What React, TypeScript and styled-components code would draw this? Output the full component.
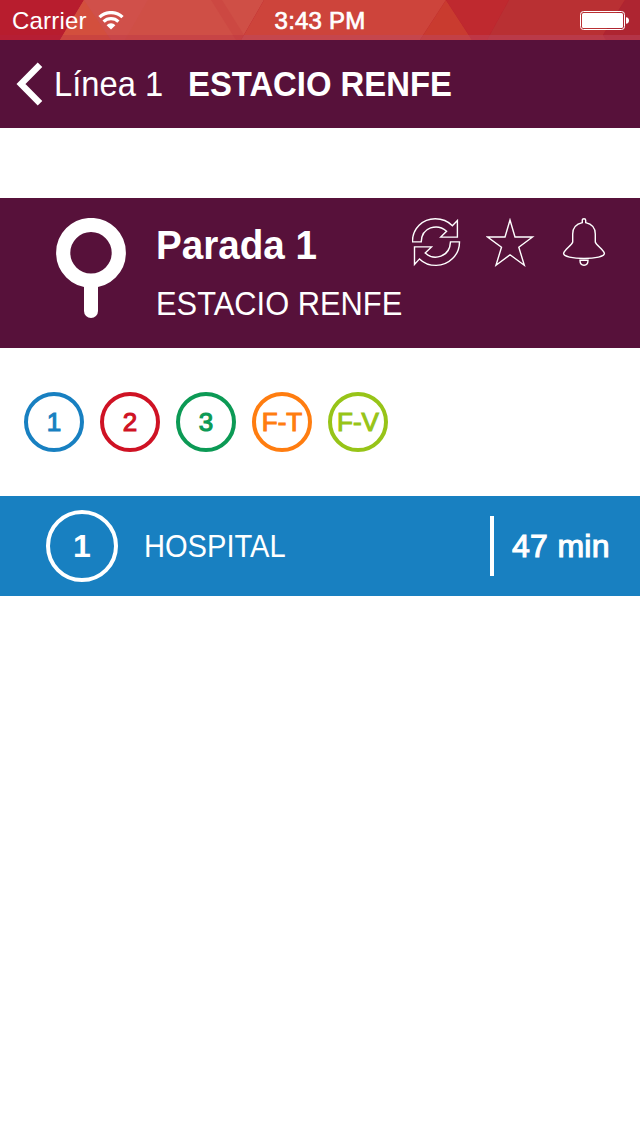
import React from "react";
import styled, { createGlobalStyle } from "styled-components";

const PLUM = "#57113a";
const BLUE = "#1880c1";

const GlobalStyle = createGlobalStyle`
  * { box-sizing: border-box; }
  body {
    margin: 0;
    background: #fff;
    font-family: "Liberation Sans", Arial, sans-serif;
  }
  svg { flex-shrink: 0; }
`;

const Screen = styled.main`
  width: 640px;
  height: 1136px;
  background: #fff;
  overflow: hidden;
`;

const StatusBar = styled.header`
  position: relative;
  display: grid;
  grid-template-columns: 1fr auto 1fr;
  align-items: center;
  height: 40px;
  padding: 1px 11px 0 12px;
  color: #fff;
  font-size: 24px;
`;

const Backdrop = styled.svg`
  position: absolute;
  inset: 0;
`;

const Carrier = styled.div`
  position: relative;
  display: flex;
  align-items: center;
  gap: 11px;
  letter-spacing: 0.2px;
`;

const Clock = styled.div`
  position: relative;
  padding-right: 1px;
  letter-spacing: 0.2px;
  -webkit-text-stroke: 0.7px #fff;
`;

const BatteryBox = styled.div`
  position: relative;
  display: flex;
  justify-content: flex-end;
`;

const NavBar = styled.nav`
  display: flex;
  align-items: center;
  height: 88px;
  padding-left: 16px;
  background: ${PLUM};
  color: #fff;
`;

/* Text narrowed horizontally from its left edge. */
const Condensed = styled.span<{ $scale: number }>`
  display: block;
  width: max-content;
  transform: scaleX(${(p) => p.$scale});
  transform-origin: left;
`;

const BackLabel = styled.span`
  margin-left: 10px;
  width: 134px;
  font-size: 35px;
  white-space: nowrap;
`;

const NavTitle = styled.h1`
  margin: 0;
  font-size: 35px;
  font-weight: 700;
`;

const StopPanel = styled.section`
  display: flex;
  height: 150px;
  margin-top: 70px;
  padding: 20px 30px 0 56px;
  background: ${PLUM};
  color: #fff;
`;

const StopText = styled.div`
  flex: 1;
  min-width: 0;
  margin-left: 30px;
  white-space: nowrap;
`;

const StopName = styled.h2`
  margin: 0;
  font-size: 40px;
  font-weight: 700;
  line-height: 55px;
`;

const StopPlace = styled.p`
  margin: 0;
  font-size: 33px;
  line-height: 62px;
`;

const Actions = styled.div`
  display: flex;
  gap: 24px;
  height: 50px;
`;

const LineList = styled.div`
  display: flex;
  gap: 16px;
  padding: 44px 24px;
`;

const LineBadge = styled.span<{ $color: string; $size: number; $font: number }>`
  display: flex;
  align-items: center;
  justify-content: center;
  width: ${(p) => p.$size}px;
  height: ${(p) => p.$size}px;
  border: 4px solid ${(p) => p.$color};
  border-radius: 50%;
  color: ${(p) => p.$color};
  font-size: ${(p) => p.$font}px;
  font-weight: ${(p) => (p.$size > 60 ? 700 : 400)};
  -webkit-text-stroke: ${(p) => (p.$size > 60 ? 0 : 1.1)}px ${(p) => p.$color};
  white-space: nowrap;
`;

const ArrivalRow = styled.div`
  display: flex;
  align-items: center;
  height: 100px;
  padding-left: 46px;
  background: ${BLUE};
  color: #fff;
`;

const Destination = styled.span`
  flex: 1;
  margin-left: 26px;
  padding-top: 1px;
  font-size: 31px;
`;

const Wait = styled.span`
  display: flex;
  align-items: center;
  width: 150px;
  height: 60px;
  padding-left: 18px;
  border-left: 4px solid #fff;
  font-size: 32px;
  letter-spacing: 0.3px;
  -webkit-text-stroke: 1.1px #fff;
`;

const lines = [
  { name: "1", color: BLUE },
  { name: "2", color: "#cf1224" },
  { name: "3", color: "#0c9a55" },
  { name: "F-T", color: "#ff7d10" },
  { name: "F-V", color: "#97c418" },
];

const StatusBackdrop = () => (
  <Backdrop width="640" height="40" viewBox="0 0 640 40">
    <rect width="640" height="40" fill="#b81d2e" />
    <path d="M84 0H264L241 40H60Z" fill="#cf4f46" />
    <path d="M84 0L111 40H60Z" fill="#d34f3d" />
    <path d="M84 0H148L125 40H111Z" fill="#d0504a" />
    <path d="M211 0H222L244 35L241 40H236Z" fill="#cc4842" />
    <path d="M264 0H446L420 40H241Z" fill="#cd443b" />
    <path d="M446 0L472 40H420Z" fill="#c93b2f" />
    <path d="M446 0H509L487 40H472Z" fill="#bf292f" />
    <path d="M509 0H625L603 35L606 40H487Z" fill="#b93033" />
    <path d="M625 0H640V40H606L603 35Z" fill="#ae2531" />
    <path d="M0 35H640V40H0Z" fill="#b02348" opacity="0.25" />
    <path d="M244 35H640V40H241Z" fill="#c8637a" opacity="0.25" />
  </Backdrop>
);

const WifiIcon = () => (
  <svg width="26" height="20" viewBox="0 0 26 20" fill="none" stroke="#fff" strokeWidth="3.2">
    <path d="M1.500 6.200A16.500 16.500 0 0 1 24.500 6.200" />
    <path d="M5.600 10.600A10.800 10.800 0 0 1 20.400 10.600" />
    <path d="M13 18.500L8.600 14.200A6.200 6.200 0 0 1 17.400 14.200Z" fill="#fff" stroke="none" />
  </svg>
);

const BatteryIcon = () => (
  <svg width="49" height="20" viewBox="0 0 49 20">
    <rect x="0.5" y="0.5" width="44" height="18" rx="3" fill="none" stroke="#fff" />
    <rect x="2" y="2" width="41" height="15" rx="1.5" fill="#fff" />
    <path d="M46 6.2Q49 6.5 49 9.5T46 12.8Z" fill="#fff" />
  </svg>
);

const BackIcon = () => (
  <svg width="28" height="44" viewBox="0 0 28 44" fill="none" stroke="#fff" strokeWidth="6.4">
    <path d="M24 2.800L5 22L24 41.200" />
  </svg>
);

const PinIcon = () => (
  <svg width="70" height="100" viewBox="0 0 70 100" fill="none" stroke="#fff" strokeWidth="14">
    <circle cx="35" cy="34.800" r="27.800" strokeWidth="14.200" />
    <path d="M35 66V93" strokeLinecap="round" />
  </svg>
);

const RefreshIcon = () => (
  <svg width="50" height="50" viewBox="0.8 0.4 50 50" fill="none" stroke="#fff" strokeWidth="1.4">
    <path d="M1.2 24.3C1.2 11 11.5 1.2 24 1.2C31 1.2 37 3.800 41.200 8.200L46.200 3V19.500H29.500L35.400 13.600C26 5.500 10.500 9.500 10 24.300Z" />
    <path d="M48.300 24.300C48.300 37.500 37.500 47.800 25 47.800C18.500 47.800 12.500 45.500 8.300 41.300L3.300 46.800V29.300H20.300L14 35.400C23 43.500 38.500 39.500 39.300 24.300Z" />
  </svg>
);

const StarIcon = () => (
  <svg width="50" height="50" viewBox="0 0 50 50" fill="none" stroke="#fff" strokeWidth="1.4">
    <path d="M24 2L29 19H46.500L32.800 29.200L38.300 47.200L24 36.800L10 47.200L15.500 29.200L1.600 19H19Z" />
  </svg>
);

const BellIcon = () => (
  <svg width="50" height="50" viewBox="0 0 50 50" fill="none" stroke="#fff" strokeWidth="1.4">
    <path d="M22.300 4.600V2.200Q22.300 .8 24 .8T25.700 2.200V4.600C32 6 35.300 10.500 35.300 16V24C36 27 43 31.500 44.300 35C45.500 38.500 34.500 40.500 24 40.500S2.500 38.500 3.700 35C5 31.500 12 27 12.700 24V16C12.700 10.500 16 6 22.300 4.600Z" />
    <path d="M20 42.300H28C28 46 26.500 47.300 24 47.300S20 46 20 42.300Z" />
  </svg>
);

export default function App() {
  return (
    <>
      <GlobalStyle />
      <Screen>
        <StatusBar>
          <StatusBackdrop />
          <Carrier>
            Carrier
            <WifiIcon />
          </Carrier>
          <Clock>3:43 PM</Clock>
          <BatteryBox>
            <BatteryIcon />
          </BatteryBox>
        </StatusBar>
        <NavBar>
          <BackIcon />
          <BackLabel>
            <Condensed $scale={0.935}>Línea 1</Condensed>
          </BackLabel>
          <NavTitle>
            <Condensed $scale={0.938}>ESTACIO RENFE</Condensed>
          </NavTitle>
        </NavBar>
        <StopPanel>
          <PinIcon />
          <StopText>
            <StopName>
              <Condensed $scale={0.965}>Parada 1</Condensed>
            </StopName>
            <StopPlace>
              <Condensed $scale={0.935}>ESTACIO RENFE</Condensed>
            </StopPlace>
          </StopText>
          <Actions>
            <RefreshIcon />
            <StarIcon />
            <BellIcon />
          </Actions>
        </StopPanel>
        <LineList>
          {lines.map((line) => (
            <LineBadge key={line.name} $color={line.color} $size={60} $font={26}>
              {line.name}
            </LineBadge>
          ))}
        </LineList>
        <ArrivalRow>
          <LineBadge $color="#fff" $size={72} $font={32}>
            1
          </LineBadge>
          <Destination>
            <Condensed $scale={0.938}>HOSPITAL</Condensed>
          </Destination>
          <Wait>47 min</Wait>
        </ArrivalRow>
      </Screen>
    </>
  );
}
